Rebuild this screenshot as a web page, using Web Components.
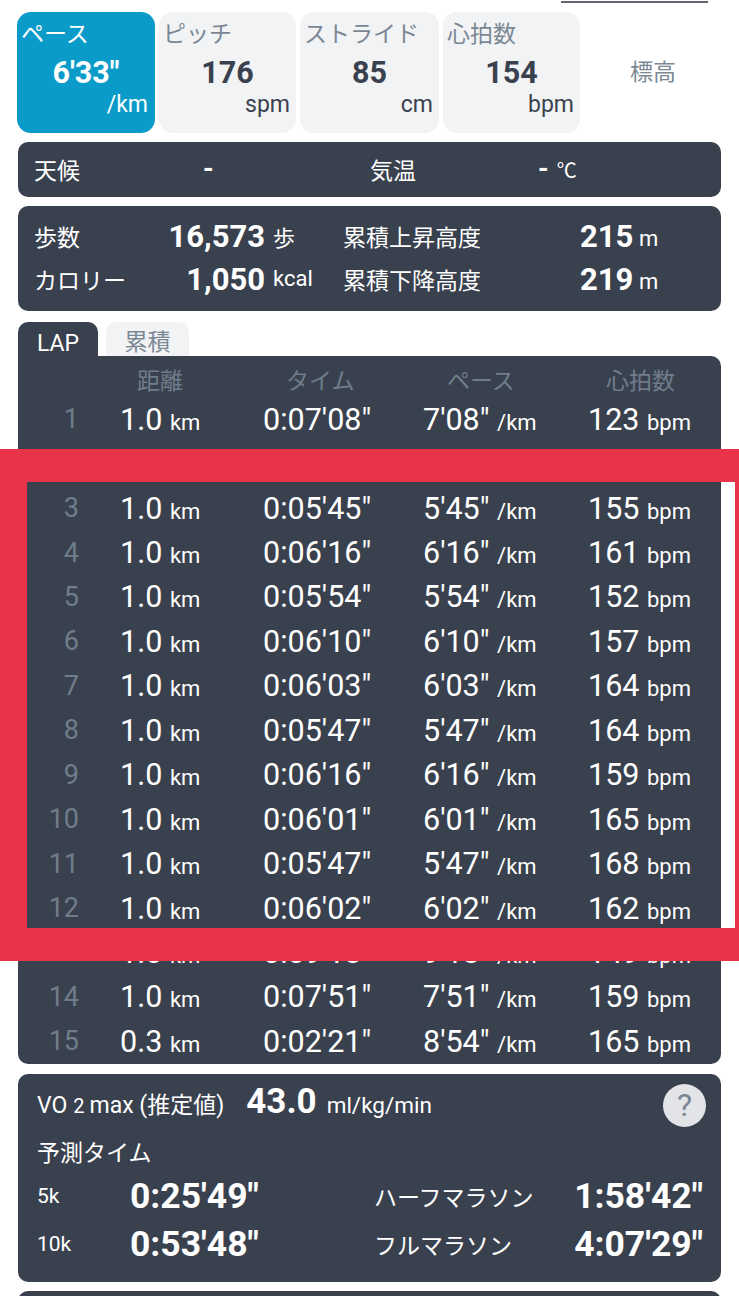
<!DOCTYPE html>
<html lang="ja"><head><meta charset="utf-8"><style>
html,body{margin:0;padding:0;background:#fff;overflow:hidden;height:1296px}
body{font-family:Roboto,"Noto Sans CJK JP",sans-serif;position:relative}
</style></head><body>
<run-page></run-page>
<script>
const FONT='Roboto,"Noto Sans CJK JP",sans-serif';
const esc=s=>s.replace(/'/g,'&#39;').replace(/"/g,'&quot;');
class MetricTab extends HTMLElement{
 constructor(){super();this.attachShadow({mode:'open'}).innerHTML=`<style>
 :host{display:block;box-sizing:border-box;height:121px;border-radius:14px;background:#f2f3f5;color:#7b8894;font-family:${FONT};padding:9px 4px 0 4px;overflow:hidden}
 :host([active]){background:#0a9bc9;color:#fff}
 :host([plain]){background:#fff;display:flex;align-items:center;justify-content:center;padding:0 0 0}
 .l{font-size:23px;line-height:28px;white-space:nowrap}
 .v{font-size:30.5px;font-weight:700;line-height:34px;text-align:center;color:#3a414e;margin-top:7px}
 :host([active]) .v{color:#fff}
 .u{font-size:23px;line-height:28px;text-align:right;color:#3a414e;margin-top:1px;padding-right:2px}
 :host([active]) .u{color:#fff;padding-right:3px}
 :host([plain]) .v,:host([plain]) .u{display:none}
 </style><div class="l"><slot name="l"></slot></div><div class="v"><slot name="v"></slot></div><div class="u"><slot name="u"></slot></div>`;}
}
customElements.define('metric-tab',MetricTab);

class DarkCard extends HTMLElement{
 constructor(){super();this.attachShadow({mode:'open'}).innerHTML=`<style>
 :host{display:block;box-sizing:border-box;background:#3a414e;color:#fff;border-radius:10px;margin:0 18px;font-family:${FONT};overflow:hidden}
 </style><slot></slot>`;}
}
customElements.define('dark-card',DarkCard);

class LapRow extends HTMLElement{
 constructor(){super();const a=(this.getAttribute('d')||'').split('|');
 this.attachShadow({mode:'open'}).innerHTML=`<style>
 :host{display:grid;grid-template-columns:62px 183px 160px 165px 1fr;height:44.45px;align-items:center;color:#fff;font-family:${FONT};font-size:30.5px;white-space:nowrap}
 .n{color:#6f7d8a;font-size:27px;text-align:right;padding:0 1px 0 0}
 .d{padding-left:40px}
 small{font-size:22px}
 </style><div class="n">${a[0]}</div>
 <div class="d">${a[1]} <small>km</small></div>
 <div>${a[2]}</div>
 <div>${a[3]} <small>/km</small></div>
 <div>${a[4]} <small>bpm</small></div>`;}
}
customElements.define('lap-row',LapRow);

class RunPage extends HTMLElement{
 constructor(){super();
 const rows=[["1","1.0","0:07'08\"","7'08\"","123"],["2","1.0","0:07'10\"","7'10\"","140"],["3","1.0","0:05'45\"","5'45\"","155"],["4","1.0","0:06'16\"","6'16\"","161"],["5","1.0","0:05'54\"","5'54\"","152"],["6","1.0","0:06'10\"","6'10\"","157"],["7","1.0","0:06'03\"","6'03\"","164"],["8","1.0","0:05'47\"","5'47\"","164"],["9","1.0","0:06'16\"","6'16\"","159"],["10","1.0","0:06'01\"","6'01\"","165"],["11","1.0","0:05'47\"","5'47\"","168"],["12","1.0","0:06'02\"","6'02\"","162"],["13","1.0","0:09'18\"","9'18\"","149"],["14","1.0","0:07'51\"","7'51\"","159"],["15","0.3","0:02'21\"","8'54\"","165"]];
 this.attachShadow({mode:'open'}).innerHTML=`<style>
 :host{display:block;height:1296px;position:relative;overflow:hidden;font-family:${FONT};color:#fff}
 .top{height:2px;margin:1px 31px 0 561px;background:#62676f}
 .tabs{display:grid;grid-template-columns:138px 137px 139px 137px 138px;gap:4px;margin:9px 0 0 17px;height:121px}
 .wx{display:flex;height:55px;margin-top:9px;align-items:center;font-size:23px;padding:0 0 1px 16px}
 .dash{font-weight:700;font-size:27px}
 .stats{display:grid;grid-template-columns:81px 150px 78px 237px 1fr;grid-template-rows:43px 43px;height:105px;margin-top:9px;padding:8px 0 0 16px;font-size:23px;white-space:nowrap;align-items:center}
 .stats b{font-size:31px;position:relative;top:1px}
 .stats small{font-size:22px}
 .stats .r{text-align:right}
 .stats .unit{padding-left:8px}
 .tabrow{display:flex;margin:11px 0 0 18px;height:34px;gap:8px;font-size:23px}
 .tabrow span{height:34px;border-radius:10px 10px 0 0;display:flex;align-items:center;justify-content:center}
 .lap{width:80px;background:#3a414e;color:#fff;padding-top:8px;box-sizing:border-box}
 .sum{width:83px;background:#f2f3f5;color:#7b8894;padding-top:1px;box-sizing:border-box}
 .head{display:grid;grid-template-columns:119px 149px 161px 159px 1fr;height:41px;color:#6f7d8a;font-size:23px;align-items:center;white-space:nowrap;position:relative;top:2px}
 .vo{height:208px;margin-top:10px;padding:0 15px 0 19px}
 .vo1{display:flex;align-items:baseline;height:52px;white-space:nowrap;font-size:22.5px;padding-top:5px;box-sizing:border-box;line-height:46px}
 .vo1 .t{font-size:23px}
 .vo1 sub{font-size:20px;vertical-align:baseline;margin:0 5px 0 6px}
 .q{margin-left:auto;width:43px;height:43px;border-radius:50%;background:#e2e4e8;color:#7b8894;font-size:32px;display:flex;align-items:center;justify-content:center;align-self:center;margin-top:5px}
 .pred{font-size:23px;height:38px;line-height:38px;margin-top:9px}
 .grid{display:grid;grid-template-columns:93px 244px 1fr auto;grid-auto-rows:48px;align-items:center;white-space:nowrap;margin-top:-1px;padding-right:3px}
 .grid b{font-size:35.5px}
 .grid i{font-style:normal;font-size:21px}
 .grid em{font-style:normal;font-size:23px}
 .mark{position:absolute;left:0;top:449px;width:739px;height:512px;box-sizing:border-box;border:solid #e93348;border-width:33px 4px 33px 27px}
 </style>
 <div class="top"></div>
 <div class="tabs">
  <metric-tab active><span slot="l">ペース</span><span slot="v">6'33"</span><span slot="u">/km</span></metric-tab>
  <metric-tab><span slot="l">ピッチ</span><span slot="v">176</span><span slot="u">spm</span></metric-tab>
  <metric-tab><span slot="l">ストライド</span><span slot="v">85</span><span slot="u">cm</span></metric-tab>
  <metric-tab><span slot="l">心拍数</span><span slot="v">154</span><span slot="u">bpm</span></metric-tab>
  <metric-tab plain><span slot="l">標高</span></metric-tab>
 </div>
 <dark-card class="wx">
  <span style="width:169px">天候</span><span class="dash" style="width:167px">-</span><span style="width:168px">気温</span><span class="dash">-</span><span style="margin-left:8px;font-size:20px">℃</span>
 </dark-card>
 <dark-card class="stats">
  <span>歩数</span><span class="r"><b>16,573</b></span><span class="unit"><small>歩</small></span><span>累積上昇高度</span><span><b>215</b> <small>m</small></span>
  <span>カロリー</span><span class="r"><b>1,050</b></span><span class="unit"><small>kcal</small></span><span>累積下降高度</span><span><b>219</b> <small>m</small></span>
 </dark-card>
 <div class="tabrow"><span class="lap">LAP</span><span class="sum">累積</span></div>
 <dark-card style="border-top-left-radius:0;height:708px">
  <div class="head"><span></span><span>距離</span><span>タイム</span><span>ペース</span><span>心拍数</span></div>
  ${rows.map(r=>`<lap-row d="${esc(r.join('|'))}"></lap-row>`).join('')}
 </dark-card>
 <dark-card class="vo">
  <div class="vo1"><span class="t">VO<sub>2</sub>max (推定値)</span><b style="font-size:35px;margin-left:22px">43.0</b><span style="margin-left:10px">ml/kg/min</span><span class="q">?</span></div>
  <div class="pred">予測タイム</div>
  <div class="grid">
   <i>5k</i><b>0:25'49"</b><em>ハーフマラソン</em><b>1:58'42"</b>
   <i>10k</i><b>0:53'48"</b><em>フルマラソン</em><b>4:07'29"</b>
  </div>
 </dark-card>
 <dark-card style="height:30px;margin-top:9px"></dark-card>
 <div class="mark"></div>
 `;}
}
customElements.define('run-page',RunPage);
</script>
</body></html>
